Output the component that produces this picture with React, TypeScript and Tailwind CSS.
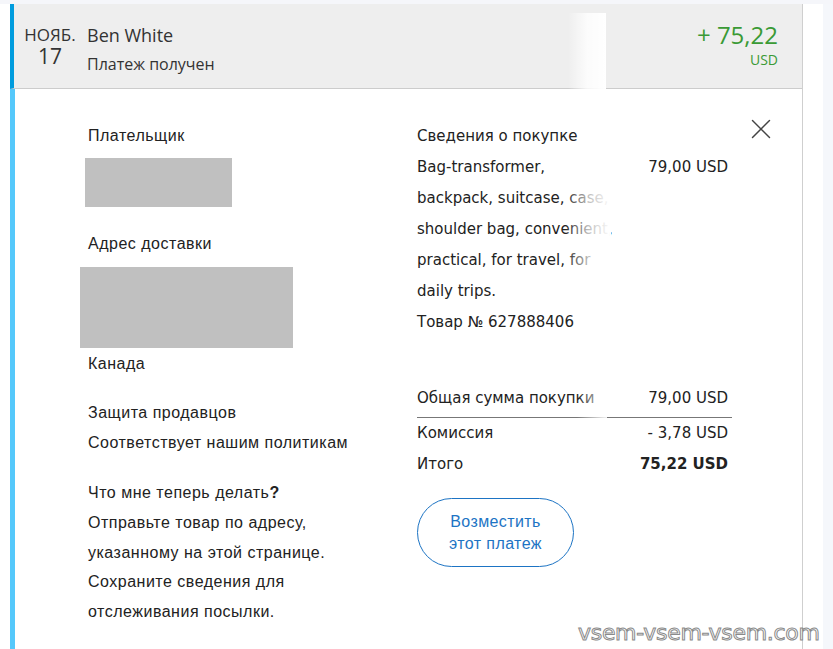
import { X } from "lucide-react";

const left = "font-['Liberation_Sans',Arial,sans-serif] text-[16px] leading-[30px] tracking-[0.5px] text-[#222]";
const right = "font-['DejaVu_Sans',Verdana,sans-serif] text-[15px] leading-[31px] text-[#222]";

export default function App() {
  return (
    <div className="relative w-[833px] h-[649px] overflow-hidden bg-white">
      <div className="h-[4px] bg-[#f5f6fa]" />
      <div className="flex">
        <div className="w-[10px]" />
        <div className="w-[793px] border-r border-[#cfcfcf]">
          {/* header row */}
          <div className="relative flex h-[85px] items-start border-l-4 border-b border-l-[#009cde] border-b-[#cccccc] bg-[#eeeeee] font-['Open_Sans',sans-serif]">
            <div className="mt-[21px] ml-[8px] flex w-[56px] flex-col items-center text-[#333]">
              <span className="text-[17px] leading-[20px]">НОЯБ.</span>
              <span className="text-[21px] leading-[22px]">17</span>
            </div>
            <div className="mt-[17px] ml-[9px] flex flex-col text-[#333]">
              <span className="text-[18px] leading-[28px]">Ben White</span>
              <span className="text-[16px] leading-[30px]">Платеж получен</span>
            </div>
            <div className="mr-[24px] mt-[14px] ml-auto flex flex-col items-end">
              <span className="text-[24px] leading-[34px] text-[#3a9a35]">+ 75,22</span>
              <span className="text-[14px] leading-[16px] text-[#3a9a35]">USD</span>
            </div>
            <div className="absolute left-[554px] top-[9px] h-[76px] w-[38px] bg-gradient-to-r from-transparent via-white/80 to-white" />
          </div>

          {/* details */}
          <div className="relative flex h-[560px] border-l-[5px] border-[#55c8fb] pt-[32px]">
            <div className={`ml-[73px] w-[329px] flex flex-col ${left}`}>
              <span>Плательщик</span>
              <div className="mt-[7px] -ml-[3px] h-[49px] w-[147px] bg-[#c0c0c0]" />
              <span className="mt-[22px]">Адрес доставки</span>
              <div className="mt-[8px] -ml-[8px] h-[81px] w-[213px] bg-[#c0c0c0]" />
              <span className="mt-[1px]">Канада</span>
              <span className="mt-[19px]">Защита продавцов</span>
              <span>Соответствует нашим политикам</span>
              <span className="mt-[20px]">
                Что мне теперь делать<b>?</b>
              </span>
              <span className="leading-[29.6px]">Отправьте товар по адресу,</span>
              <span className="leading-[29.6px]">указанному на этой странице.</span>
              <span className="leading-[29.6px]">Сохраните сведения для</span>
              <span className="leading-[29.6px]">отслеживания посылки.</span>
            </div>

            <div className={`w-[315px] flex flex-col ${right}`}>
              <span>Сведения о покупке</span>
              <div className="relative flex justify-between">
                <div className="w-[206px]">
                  Bag-transformer, backpack, suitcase, case, shoulder bag, convenient, practical, for travel, for daily trips.
                </div>
                <span className="pr-[4px]">79,00 USD</span>
                <div className="absolute left-[148px] top-[31px] h-[124px] w-[46px] bg-gradient-to-r from-transparent via-white/70 to-white" />
              </div>
              <span>Товар № 627888406</span>

              <div className="relative mt-[45px] flex justify-between border-b border-[#777] pb-[3px] pr-[4px]">
                <span>Общая сумма покупки</span>
                <span>79,00 USD</span>
                <div className="absolute left-[160px] top-0 h-[35px] w-[30px] bg-gradient-to-r from-transparent to-white/90" />
              </div>
              <div className="flex justify-between pr-[4px]">
                <span>Комиссия</span>
                <span>- 3,78 USD</span>
              </div>
              <div className="flex justify-between pr-[4px]">
                <span>Итого</span>
                <span className="font-bold">75,22 USD</span>
              </div>
              <button className="mt-[18px] flex h-[69px] w-[157px] flex-col items-center justify-center rounded-full border border-[#1d74c4] font-['Liberation_Sans',Arial,sans-serif] text-[16px] leading-[22px] tracking-[0.4px] text-[#1d74c4]">
                <span>Возместить</span>
                <span>этот платеж</span>
              </button>
            </div>

            <X className="absolute left-[729px] top-[23px] h-[34px] w-[34px] text-[#444]" strokeWidth={1} />
          </div>
        </div>
        <div className="w-[20px]" />
        <div className="h-[649px] w-[10px] bg-[#f5f7fb]" />
      </div>

      <div className="absolute left-[578px] top-[616px] whitespace-nowrap font-['DejaVu_Sans',sans-serif] text-[22px] tracking-[-0.3px] text-white [-webkit-text-stroke:1px_#8a8a8a]">
        vsem-vsem-vsem.com
      </div>
    </div>
  );
}
